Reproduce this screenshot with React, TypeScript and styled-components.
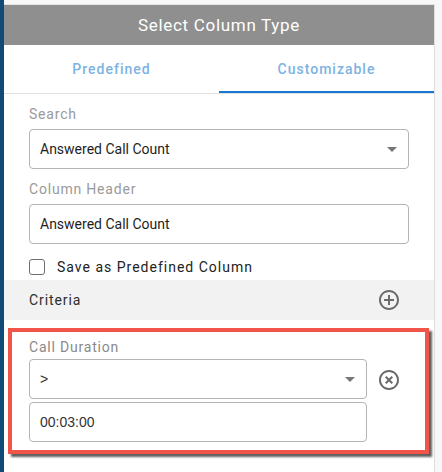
import React from "react";
import styled, { createGlobalStyle } from "styled-components";

const GlobalStyle = createGlobalStyle`
  html, body {
    margin: 0;
    padding: 0;
    background: #f7f7f7;
    font-family: Roboto, "Liberation Sans", sans-serif;
  }
  * { box-sizing: border-box; }
`;

const AddCircleIcon = () => (
  <svg width="24" height="24" viewBox="0 0 24 24" fill="#6b6b6b">
    <path d="M13 7h-2v4H7v2h4v4h2v-4h4v-2h-4V7zm-1-5C6.48 2 2 6.48 2 12s4.48 10 10 10 10-4.48 10-10S17.52 2 12 2zm0 18c-4.41 0-8-3.59-8-8s3.59-8 8-8 8 3.59 8 8-3.59 8-8 8z" />
  </svg>
);

const RemoveCircleIcon = () => (
  <svg width="24" height="24" viewBox="0 0 24 24" fill="#6b6b6b">
    <path d="M14.59 8L12 10.59 9.41 8 8 9.41 10.59 12 8 14.59 9.41 16 12 13.41 14.59 16 16 14.59 13.41 12 16 9.41 14.59 8zM12 2C6.47 2 2 6.47 2 12s4.47 10 10 10 10-4.47 10-10S17.53 2 12 2zm0 18c-4.41 0-8-3.59-8-8s3.59-8 8-8 8 3.59 8 8-3.59 8-8 8z" />
  </svg>
);

const App = () => (
  <>
    <GlobalStyle />
    <Page>
      <SideStrip />
      <Panel>
        <Header>Select Column Type</Header>
        <Tabs>
          <Tab>Predefined</Tab>
          <Tab active>Customizable</Tab>
        </Tabs>
        <Form>
          <Label>Search</Label>
          <Field>
            <FieldText>Answered Call Count</FieldText>
            <Caret />
          </Field>
          <Label spaced>Column Header</Label>
          <Field>
            <FieldText>Answered Call Count</FieldText>
          </Field>
          <CheckRow>
            <Checkbox />
            <CheckLabel>Save as Predefined Column</CheckLabel>
          </CheckRow>
        </Form>
        <CriteriaBar>
          <CriteriaTitle>Criteria</CriteriaTitle>
          <IconButton>
            <AddCircleIcon />
          </IconButton>
        </CriteriaBar>
        <CriteriaItem>
          <Label>Call Duration</Label>
          <ItemRow>
            <ItemFields>
              <Field>
                <FieldText plain>&gt;</FieldText>
                <Caret />
              </Field>
              <Field>
                <FieldText plain>00:03:00</FieldText>
              </Field>
            </ItemFields>
            <IconButton>
              <RemoveCircleIcon />
            </IconButton>
          </ItemRow>
          <Highlight />
        </CriteriaItem>
      </Panel>
    </Page>
  </>
);

const Page = styled.div`
  display: flex;
  height: 472px;
  width: 442px;
  overflow: hidden;
`;

const SideStrip = styled.div`
  width: 4px;
  background: #0f4a78;
  flex-shrink: 0;
`;

const Panel = styled.div`
  width: 431px;
  margin-top: 4px;
  background: #fff;
  border-top: 1px solid #e4e4e4;
  border-right: 1px solid #dedede;
  display: flex;
  flex-direction: column;
`;

const Header = styled.div`
  height: 40px;
  background: #8f8f8f;
  color: #fff;
  font-size: 17px;
  font-weight: 400;
  letter-spacing: 0.7px;
  display: flex;
  align-items: center;
  justify-content: center;
`;

const Tabs = styled.div`
  display: flex;
  height: 49px;
  border-bottom: 1px solid #e0e0e0;
`;

const Tab = styled.div<{ active?: boolean }>`
  flex: 1;
  display: flex;
  align-items: center;
  justify-content: center;
  padding-top: 2px;
  color: #7db3e3;
  font-size: 14px;
  font-weight: 500;
  letter-spacing: 1px;
  border-bottom: 2px solid ${(p) => (p.active ? "#1976d2" : "transparent")};
`;

const Form = styled.div`
  display: flex;
  flex-direction: column;
  padding: 10px 25px 0 25px;
`;

const Label = styled.div<{ spaced?: boolean }>`
  font-size: 14px;
  line-height: 20px;
  letter-spacing: 0.8px;
  color: #9a9a9a;
  margin-top: ${(p) => (p.spaced ? "10px" : "0")};
  margin-bottom: 5px;
`;

const Field = styled.div`
  height: 40px;
  border: 1px solid #b4b4b4;
  border-radius: 4px;
  display: flex;
  align-items: center;
  padding: 0 10px;
  background: #fff;
`;

const FieldText = styled.span<{ plain?: boolean }>`
  flex: 1;
  font-family: ${(p) =>
    p.plain ? '"Liberation Sans", Arial, sans-serif' : 'Roboto, "Liberation Sans", sans-serif'};
  font-size: 14px;
  color: ${(p) => (p.plain ? "#333" : "#1e1e1e")};
`;

const Caret = styled.span`
  width: 0;
  height: 0;
  border-left: 5px solid transparent;
  border-right: 5px solid transparent;
  border-top: 5px solid #777;
  margin-right: 1px;
`;

const CheckRow = styled.div`
  display: flex;
  align-items: center;
  height: 36px;
  padding-top: 14px;
  padding-bottom: 4px;
`;

const Checkbox = styled.span`
  width: 16px;
  height: 16px;
  border: 1.5px solid #6e6e6e;
  border-radius: 3px;
  margin-right: 12px;
`;

const CheckLabel = styled.span`
  font-size: 14px;
  letter-spacing: 1px;
  color: #222;
`;

const CriteriaBar = styled.div`
  height: 40px;
  background: #f2f2f2;
  display: flex;
  align-items: center;
  justify-content: space-between;
  padding: 0 33px 0 25px;
`;

const CriteriaTitle = styled.span`
  font-size: 14px;
  letter-spacing: 0.9px;
  color: #2e2e2e;
`;

const IconButton = styled.span`
  width: 24px;
  height: 24px;
  display: flex;
  align-items: center;
  justify-content: center;
`;

const CriteriaItem = styled.div`
  position: relative;
  padding: 17px 33px 0 25px;
  display: flex;
  flex-direction: column;

  ${Label} {
    color: #8a8a8a;
    margin-bottom: 2px;
  }
`;

const ItemRow = styled.div`
  display: flex;
  align-items: flex-start;
  gap: 10px;

  ${IconButton} {
    margin-top: 9px;
  }
`;

const ItemFields = styled.div`
  flex: 1;
  display: flex;
  flex-direction: column;
  gap: 3px;
`;

const Highlight = styled.div`
  position: absolute;
  left: 4px;
  right: 5px;
  top: 8px;
  height: 126px;
  border: 4px solid #f15449;
  box-shadow: 3px 3px 2px rgba(40, 40, 40, 0.75);
  pointer-events: none;
`;

export default App;
